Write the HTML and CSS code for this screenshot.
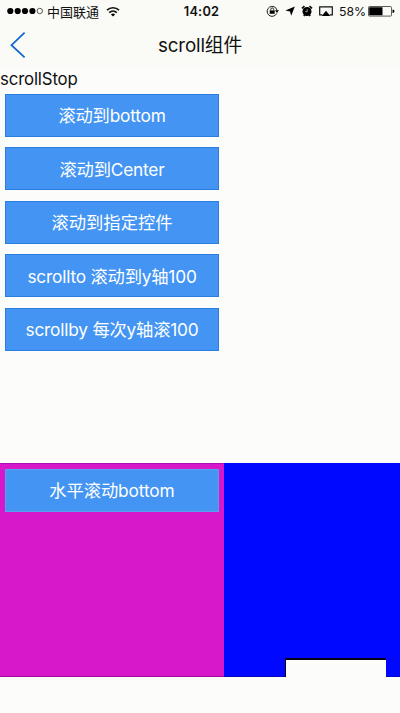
FILE: index.html
```
<!DOCTYPE html>
<html lang="zh-CN">
<head>
<meta charset="utf-8">
<title>scroll组件</title>
<link rel="stylesheet" href="styles.css">
</head>
<body>
<div class="screen">
  <header class="header">
    <div class="status">
      <div class="status-left">
        <svg class="signal" width="37" height="8" viewBox="0 0 37 8"><circle cx="3.3" cy="4" r="3.1"/><circle cx="10.7" cy="4" r="3.1"/><circle cx="18" cy="4" r="3.1"/><circle cx="25.4" cy="4" r="3.1"/><circle cx="32.8" cy="4" r="2.7" fill="none" stroke="#333" stroke-width=".8"/></svg>
        <span class="carrier">中国联通</span>
        <svg class="wifi" width="14" height="11" viewBox="0 0 14 11"><g fill="none" stroke="#111" stroke-width="1.7"><path d="M1 4.2a8.6 8.6 0 0 1 12 0"/><path d="M3.2 6.7a5.5 5.5 0 0 1 7.6 0"/></g><path d="M4.9 8.4a3.1 3.1 0 0 1 4.2 0L7 10.6z"/></svg>
      </div>
      <span class="time">14:02</span>
      <div class="status-right">
        <svg class="lock" width="13" height="12" viewBox="0 0 13 12"><path d="M10.7 8.4A5 5 0 1 1 11 5.2" fill="none" stroke="#222"/><path d="M8.9 5.3h4L11 8z"/><path d="M3.7 5.4h5v3.4h-5z"/><path d="M4.7 5.5V4.4a1.5 1.5 0 0 1 3 0v1.1" fill="none" stroke="#111" stroke-width=".9"/></svg>
        <svg class="arrow" width="10" height="10" viewBox="0 0 10 10"><path d="M9.8.4 6.2 9.8 5 5.4.4 4.6z"/></svg>
        <svg class="alarm" width="12" height="12" viewBox="0 0 12 12"><circle cx="6" cy="6.5" r="4.5"/><path d="M1 3.4 3.5 1.2M11 3.4 8.5 1.2M2.8 11l1-1.3M9.2 11l-1-1.3" stroke="#111" stroke-width="1.7"/><path d="M6.2 4.2v2.5H4.2" fill="none" stroke="#ddd" stroke-width=".7"/></svg>
        <svg class="airplay" width="14" height="11" viewBox="0 0 14 11"><path d="M3.2 8.8H.7V.9h12.6v7.9h-2.5" fill="none" stroke="#111" stroke-width="1.2"/><path d="m7 4.7 4.3 5.4H2.7z"/></svg>
        <span class="percent">58%</span>
        <svg class="battery" width="27" height="11" viewBox="0 0 27 11"><rect x=".5" y=".5" width="23" height="9.6" rx="1" fill="none" stroke="#333" stroke-width=".8"/><path d="M1.2 1.3h13.3v8H1.2zM24.5 3.5q2 .3 2 1.8t-2 1.8z"/></svg>
      </div>
    </div>
    <div class="navbar">
      <svg class="back" width="16" height="28" viewBox="0 0 16 28"><path d="M14.6 1.6 1.5 14.2l13.1 12.2" fill="none" stroke="#1269cc" stroke-width="1.8"/></svg>
      <h1 class="title">scroll组件</h1>
    </div>
  </header>
  <main class="page">
    <div class="event">scrollStop</div>
    <div class="buttons">
      <button class="btn">滚动到bottom</button>
      <button class="btn">滚动到Center</button>
      <button class="btn">滚动到指定控件</button>
      <button class="btn">scrollto 滚动到y轴100</button>
      <button class="btn">scrollby 每次y轴滚100</button>
    </div>
  </main>
  <section class="strip">
    <div class="pane pane-magenta"><button class="btn btn-strip">水平滚动bottom</button></div>
    <div class="pane pane-blue"></div>
  </section>
  <div class="cover"></div>
</div>
</body>
</html>
```
FILE: styles.css
```
* { box-sizing: border-box; }
body { margin: 0; font-family: Inter, "Noto Sans CJK SC", sans-serif; color: #111; }
svg { display: block; flex: none; }
.screen { position: relative; display: flex; flex-direction: column; width: 400px; height: 713px; overflow: hidden; background: #fcfcfa; }
.header { height: 68px; flex: none; background: #fafaf6; }
.status { display: grid; grid-template-columns: 183px 37px 1fr; align-items: center; height: 22px; }
.status-left, .status-right { display: flex; align-items: center; }
.status-left { padding-left: 7px; }
.carrier { margin-left: 3px; width: 54px; padding-top: 1px; font-size: 13px; line-height: 20px; white-space: nowrap; }
.wifi { margin-left: 5px; }
.time { padding-top: 1px; font-size: 12.8px; font-weight: 600; line-height: 20px; letter-spacing: .2px; text-align: center; white-space: nowrap; }
.status-right { padding-left: 46px; }
.arrow { margin-left: 6px; }
.alarm { margin-left: 6px; }
.airplay { margin-left: 6px; }
.percent { margin-left: 6px; width: 27px; padding-top: 1px; font-size: 12.3px; line-height: 20px; white-space: nowrap; }
.battery { margin-left: 2px; }
.navbar { position: relative; display: flex; align-items: center; justify-content: center; height: 46px; }
.back { position: absolute; left: 10px; top: 9px; }
.title { margin: 0; padding-top: 2px; font-size: 18.8px; font-weight: 400; line-height: 28px; letter-spacing: -.15px; }
.page { height: 395px; flex: none; }
.event { height: 26px; font-size: 16.8px; line-height: 23px; letter-spacing: -.15px; }
.buttons { display: flex; flex-direction: column; gap: 10.7px; padding: 0 0 0 5px; }
.btn { display: flex; align-items: center; justify-content: center; width: 214px; height: 42.8px; margin: 0; padding: 2px 0 0; border: 1px solid #2c7de0; border-radius: 0; background: #4495f3; color: #fff; font-family: inherit; font-size: 17.3px; line-height: 26px; letter-spacing: -.2px; white-space: nowrap; }
.btn:nth-child(3) { letter-spacing: 0; }
.strip { display: flex; height: 214px; flex: none; }
.pane-magenta { width: 224px; padding: 5px; background: #d617ca; border-top: 1px solid #b00cb4; border-bottom: 1px solid #9c0799; }
.pane-blue { flex: 1; background: #0008ff; border-bottom: 1px solid #0508bf; }
.btn-strip { height: 43px; padding: 0; border-color: #589fee; letter-spacing: -.1px; }
.cover { position: absolute; left: 285px; top: 658px; width: 101px; height: 19px; background: #fcfcfa; border-top: 2px solid #080014; border-left: 1px solid #080014; }
```
